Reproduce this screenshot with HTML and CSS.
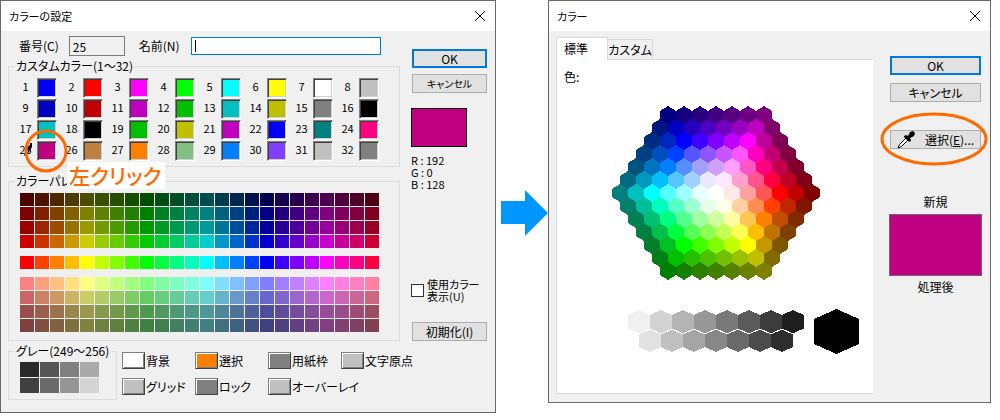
FILE: index.html
```html
<!DOCTYPE html>
<html lang="ja">
<head>
<meta charset="utf-8">
<title>カラーの設定</title>
<link rel="stylesheet" href="styles.css">
</head>
<body>
<main class="page">
  <section class="dialog">
    <header class="titlebar">
      <h1 class="title">カラーの設定</h1>
      <button class="close" type="button"><svg width="12" height="12" viewBox="0 0 12 12"><path d="M1 1L11 11M11 1L1 11"/></svg></button>
    </header>
    <div class="settings">
      <div class="main">
        <div class="fields">
          <label for="num">番号(C)</label>
          <input class="num" id="num" type="text" value="25" readonly>
          <label for="name">名前(N)</label>
          <span class="name-wrap"><input class="name" id="name" type="text"><i class="caret"></i></span>
        </div>
        <fieldset class="group custom">
          <legend>カスタムカラー(1～32)</legend>
          <div class="custom-grid" id="custom"></div>
          <svg class="pick-small" width="9" height="14" viewBox="0 0 9 14"><path d="M6 0h2v4L5 9 3 11 1 13 0 12 3 7V4l3-2z" fill="#000"/><path d="M2 10l2-3" stroke="#fff"/></svg>
          <svg class="ring" width="44" height="44" viewBox="0 0 44 44"><circle cx="22" cy="22" r="20"/></svg>
          <span class="note">左クリック</span>
        </fieldset>
        <fieldset class="group palette">
          <legend>カラーパレット</legend>
          <div class="palette-rows" id="palette"></div>
        </fieldset>
      </div>
      <div class="side">
        <button class="btn primary" type="button">OK</button>
        <button class="btn narrow" type="button">キャンセル</button>
        <div class="current"></div>
        <div class="rgb"><p>R : 192</p><p>G : 0</p><p>B : 128</p></div>
        <div class="used">
          <input id="used" type="checkbox">
          <label for="used">使用カラー<br>表示(U)</label>
        </div>
        <button class="btn" type="button">初期化(I)</button>
      </div>
    </div>
    <div class="bottom">
      <fieldset class="group gray">
        <legend>グレー(249～256)</legend>
        <div class="gray-grid" id="gray"></div>
      </fieldset>
      <div class="roles">
        <label class="role"><button class="chip white" type="button"></button>背景</label>
        <label class="role"><button class="chip orange" type="button"></button>選択</label>
        <label class="role"><button class="chip dark" type="button"></button>用紙枠</label>
        <label class="role"><button class="chip silver" type="button"></button>文字原点</label>
        <label class="role"><button class="chip silver" type="button"></button>グリッド</label>
        <label class="role"><button class="chip dark" type="button"></button>ロック</label>
        <label class="role"><button class="chip silver" type="button"></button>オーバーレイ</label>
      </div>
    </div>
  </section>

  <svg class="arrow" width="47" height="46" viewBox="0 0 47 46"><path d="M0 11H24V0L47 23 24 46V34H0z"/></svg>

  <section class="dialog">
    <header class="titlebar">
      <h2 class="title">カラー</h2>
      <button class="close" type="button"><svg width="12" height="12" viewBox="0 0 12 12"><path d="M1 1L11 11M11 1L1 11"/></svg></button>
    </header>
    <div class="picker">
      <div class="tabs-area">
        <div class="tabs">
          <button class="tab active" type="button">標準</button>
          <button class="tab" type="button">カスタム</button>
        </div>
        <div class="panel">
          <p class="color-label">色:</p>
          <svg class="wheel" id="wheel" width="210" height="174" viewBox="-105 -87 210 174"></svg>
          <div class="shades">
            <svg id="shades" width="177" height="43" viewBox="0 0 177 43"></svg>
            <svg width="45" height="45" viewBox="0 0 45 45"><path d="M0 10L22.5 0 45 10V35L22.5 45 0 35z"/></svg>
          </div>
        </div>
      </div>
      <div class="picker-side">
        <button class="btn primary" type="button">OK</button>
        <button class="btn" type="button">キャンセル</button>
        <div class="eyedrop">
          <button class="btn" type="button">
            <svg width="18" height="18" viewBox="0 0 18 18"><path d="M9.500 6.500L2.500 13.500 1 17 4.500 15.500 11.500 8.500" fill="#fff" stroke="#000"/><path d="M7 5l2-1 2 1 2-4 3-1 2 2-1 3-4 2 1 2-1 2-2-1-4-4z"/></svg>
            <span>選択(<u>E</u>)...</span>
          </button>
          <svg class="oval" width="108" height="54" viewBox="0 0 108 54"><ellipse cx="54" cy="27" rx="52" ry="25"/></svg>
        </div>
        <p class="new">新規</p>
        <div class="preview"></div>
        <p class="after">処理後</p>
      </div>
    </div>
  </section>
</main>
<script src="script.js"></script>
</body>
</html>
```
FILE: styles.css
```css
* { box-sizing: border-box; }

body {
  margin: 0;
  background: #fff;
  color: #000;
  font: 12px/14px "Noto Sans CJK JP", "Liberation Sans", sans-serif;
  font-feature-settings: "palt";
}

button, input {
  font: inherit;
  font-feature-settings: inherit;
  color: inherit;
  margin: 0;
  padding: 0;
  border-radius: 0;
}

p { margin: 0; }

.page {
  display: grid;
  grid-template-columns: minmax(0, 496fr) 52px minmax(0, 443fr);
  align-items: start;
  padding-right: 9px;
}

.dialog {
  border: 1px solid #696969;
  background: #f0f0f0;
}

.titlebar {
  display: flex;
  align-items: center;
  justify-content: space-between;
  height: 30px;
  padding: 0 9px 0 8px;
  background: #fff;
}

.title { margin: 0; font-size: 11px; font-weight: 400; }

.close {
  display: flex;
  border: 0;
  background: none;
}
.close path { stroke: #000; fill: none; }

.settings {
  display: grid;
  grid-template-columns: minmax(0, 1fr) 76px;
  column-gap: 11px;
  padding: 5px 8px 0 7px;
}

.fields {
  display: flex;
  align-items: center;
  height: 20px;
  padding: 0 19px 0 11px;
}
.num {
  width: 56px;
  height: 20px;
  margin: 0 14px 0 10px;
  padding-left: 3px;
  border: 1px solid #7a7a7a;
  background: #f0f0f0;
}
.name-wrap {
  position: relative;
  display: flex;
  flex: 1;
  margin-left: 11px;
}
.name {
  width: 100%;
  height: 18px;
  padding: 0 4px;
  border: 1px solid #0078d7;
  background: #fff;
  outline: 0;
}
.caret {
  position: absolute;
  left: 4px;
  top: 3px;
  width: 1px;
  height: 12px;
  background: #000;
}

.group {
  position: relative;
  min-width: 0;
  margin: 0;
  padding: 0;
  border: 1px solid #dcdcdc;
}
.group legend { height: 15px; margin-left: 6px; padding: 0 2px 0 1px; white-space: nowrap; }

.custom { margin-top: 3px; }
.custom-grid {
  display: grid;
  grid-template-columns: repeat(8, 46px);
  gap: 1px 0;
  padding: 4px 0 5px 7px;
}
.slot { display: grid; grid-template-columns: 19px 20px; column-gap: 2px; }
.slot span { text-align: center; font-size: 11px; line-height: 16px; }
.well {
  height: 20px;
  border: 1px solid;
  border-color: #808080 #fff #fff #808080;
  box-shadow: inset 1px 1px #404040, inset -1px -1px #d0d0d0;
}

.pick-small { position: absolute; left: 15px; top: 69px; }
.ring { position: absolute; left: 15px; top: 55px; }
.ring circle, .oval ellipse { fill: none; stroke: #ff6a00; stroke-width: 3; }
.note {
  position: absolute;
  z-index: 2;
  left: 58px;
  top: 88px;
  padding: 0 4px 0 2px;
  background: #fff;
  color: #ff6a00;
  font-size: 21px;
  font-weight: 500;
  line-height: 27px;
  white-space: nowrap;
}

.palette { margin-top: 7px; }
.palette-rows { display: grid; row-gap: 8px; padding: 4px 20px 8px 11px; }
.band { display: grid; grid-template-columns: repeat(24, 1fr); gap: 1px; }
.cell { height: 13px; border: 0; }

.side { display: flex; flex-direction: column; padding-top: 13px; }
.btn {
  display: flex;
  align-items: center;
  justify-content: center;
  height: 19px;
  border: 1px solid #adadad;
  background: #e1e1e1;
  line-height: 14px;
}
.btn.primary { border: 2px solid #0078d7; }
.btn.narrow { font-size: 10px; }
.side .btn { width: 75px; margin-left: 1px; }
.side .narrow { margin-top: 6px; }
.current {
  width: 56px;
  height: 39px;
  margin-top: 15px;
  border: 1px solid #000;
  background: #c00080;
}
.rgb { margin-top: 7px; font-size: 11px; line-height: 12px; font-feature-settings: normal; }
.used { display: flex; align-items: center; gap: 3px; margin: auto 0 20px; line-height: 12px; white-space: nowrap; }
.used label { font-size: 11px; }
.used input {
  appearance: none;
  flex: none;
  width: 13px;
  height: 13px;
  border: 1px solid #333;
  background: #fff;
}

.bottom { display: flex; gap: 5px; padding: 3px 8px 12px 7px; }
.gray { width: 109px; }
.gray-grid { display: grid; grid-template-columns: repeat(4, 19px); gap: 1px; padding: 3px 0 6px 11px; }
.gray-grid .cell { height: 15px; }
.roles {
  display: grid;
  grid-template-columns: repeat(4, 73px);
  grid-auto-rows: 17px;
  row-gap: 9px;
  padding-top: 8px;
}
.role { display: flex; align-items: center; gap: 1px; white-space: nowrap; }
.chip {
  flex: none;
  width: 23px;
  height: 17px;
  border: 1px solid;
  border-color: #808080 #404040 #404040 #808080;
  box-shadow: inset 1px 1px #fff, inset -1px -1px #808080;
}
.white { background: #fff; }
.orange { background: #ff8000; }
.dark { background: #808080; }
.silver { background: #c0c0c0; }

.arrow { justify-self: center; margin: 190px 0 0 5px; fill: #0096ff; }

.picker {
  display: grid;
  grid-template-columns: minmax(0, 1fr) 93px;
  column-gap: 16px;
  padding: 6px 8px 8px 7px;
}
.tabs { display: flex; align-items: flex-end; height: 22px; }
.tab {
  width: 45px;
  height: 20px;
  border: 1px solid #d9d9d9;
  border-width: 1px 1px 0 0;
  background: #f0f0f0;
}
.tab.active {
  position: relative;
  width: 52px;
  height: 23px;
  margin-bottom: -1px;
  padding-right: 12px;
  border-left-width: 1px;
  background: #fff;
}
.panel {
  display: flex;
  flex-direction: column;
  padding: 10px 14px 39px 7px;
  border: 1px solid #d9d9d9;
  border-right: 0;
  background: #fff;
}
.wheel { align-self: center; margin: 22px 0 0 8px; }
.shades { display: flex; align-items: center; justify-content: flex-end; gap: 9px; margin-top: 29px; }
.wheel, .shades svg { shape-rendering: crispEdges; }

.picker-side { display: flex; flex-direction: column; padding-top: 19px; text-align: center; }
.picker-side .btn { width: 91px; margin-left: 1px; }
.picker-side .primary { margin-bottom: 8px; }
.eyedrop { position: relative; margin-top: 28px; }
.eyedrop .btn { gap: 10px; }
.oval { position: absolute; left: -9px; top: -18px; }
.new { margin-top: 46px; }
.preview { height: 62px; margin-top: 5px; border: 1px solid #696969; background: #c00080; }
.after { margin-top: 4px; }
```
FILE: script.js
```js
const hex = (rgb) => '#' + rgb.map((v) => Math.round(v).toString(16).padStart(2, '0')).join('');
const NS = 'http://www.w3.org/2000/svg';

function addButton(parent, cls, color) {
  const b = document.createElement('button');
  b.type = 'button';
  b.className = cls;
  b.style.backgroundColor = color;
  parent.append(b);
}

// Custom colours 1 to 32
const custom = `0000ff ff0000 ff00ff 00ff00 00ffff ffff00 ffffff c0c0c0
0000c0 c00000 c000c0 00c000 00c0c0 c0c000 808080 000000
00c0c0 000000 00c000 c0c000 c000c0 0000ff 008080 ff0080
c00080 c08040 ff8000 80c080 0080ff 8040ff c0c0c0 808080`.split(/\s+/);
custom.forEach((c, i) => {
  const slot = document.createElement('label');
  slot.className = 'slot';
  const n = document.createElement('span');
  n.textContent = i + 1;
  slot.append(n);
  addButton(slot, 'well', '#' + c);
  document.getElementById('custom').append(slot);
});

// Palette bands: each row is a hue sweep between a low and a high channel value
const bands = [
  [[0, 77], [0, 128], [0, 153], [0, 204]],
  [[0, 255]],
  [[128, 255], [102, 204], [77, 153], [64, 128]]
];
const channel = (h) => {
  const d = Math.min(h, 360 - h);
  return Math.max(0, Math.min(1, 2 - d / 60));
};
bands.forEach((rows) => {
  const band = document.createElement('div');
  band.className = 'band';
  rows.forEach(([lo, hi]) => {
    for (let i = 0; i < 24; i++) {
      const h = i * 15;
      const rgb = [h, (h + 240) % 360, (h + 120) % 360].map((a) => lo + (hi - lo) * channel(a));
      addButton(band, 'cell', hex(rgb));
    }
  });
  document.getElementById('palette').append(band);
});

['2a2a2a', '555555', '808080', 'aaaaaa', '404040', '6a6a6a', '959595', 'd4d4d4']
  .forEach((c) => addButton(document.getElementById('gray'), 'cell', '#' + c));

function polygon(svg, points, fill) {
  const p = document.createElementNS(NS, 'polygon');
  p.setAttribute('points', points.map((q) => q.join(',')).join(' '));
  p.setAttribute('fill', fill);
  svg.append(p);
}
const hexagon = (x, y, w, s, t) => [[x, y - t], [x + w, y - s], [x + w, y + s], [x, y + t], [x - w, y + s], [x - w, y - s]];

// Colour wheel: white centre and six rings, corners red, magenta, blue, cyan, green, yellow
const wheel = document.getElementById('wheel');
const corners = [[1, 0, 0], [1, 0, 1], [0, 0, 1], [0, 1, 1], [0, 1, 0], [1, 1, 0]];
const dirs = [[16, 0], [8, -13], [-8, -13], [-16, 0], [-8, 13], [8, 13]];
const levels = [[232, 255], [160, 255], [85, 255], [0, 255], [0, 192], [0, 128]];
polygon(wheel, hexagon(0, 0, 8, 4, 9), '#fff');
levels.forEach(([lo, hi], r) => {
  const k = r + 1;
  for (let side = 0; side < 6; side++) {
    const next = (side + 1) % 6;
    for (let j = 0; j < k; j++) {
      const x = dirs[side][0] * (k - j) + dirs[next][0] * j;
      const y = dirs[side][1] * (k - j) + dirs[next][1] * j;
      const rgb = corners[side].map((c, i) => lo + (hi - lo) * (c * (k - j) + corners[next][i] * j) / k);
      polygon(wheel, hexagon(x, y, 8, 4, 9), hex(rgb));
    }
  }
});

// Grey shades, upper row over lower row
const shades = document.getElementById('shades');
[225, 192, 165, 135, 105, 75, 45].forEach((v, i) => polygon(shades, hexagon(22 + i * 22, 30, 11, 7, 12), hex([v, v, v])));
[240, 211, 180, 151, 121, 90, 60, 30].forEach((v, i) => {
  const x = 11 + i * 22;
  const line = document.createElementNS(NS, 'path');
  line.setAttribute('d', `M${x - 11} 19L${x} 24L${x + 11} 19`);
  line.setAttribute('stroke', '#fff');
  line.setAttribute('fill', 'none');
  polygon(shades, hexagon(x, 12, 11, 7, 12), hex([v, v, v]));
  shades.append(line);
});
```
